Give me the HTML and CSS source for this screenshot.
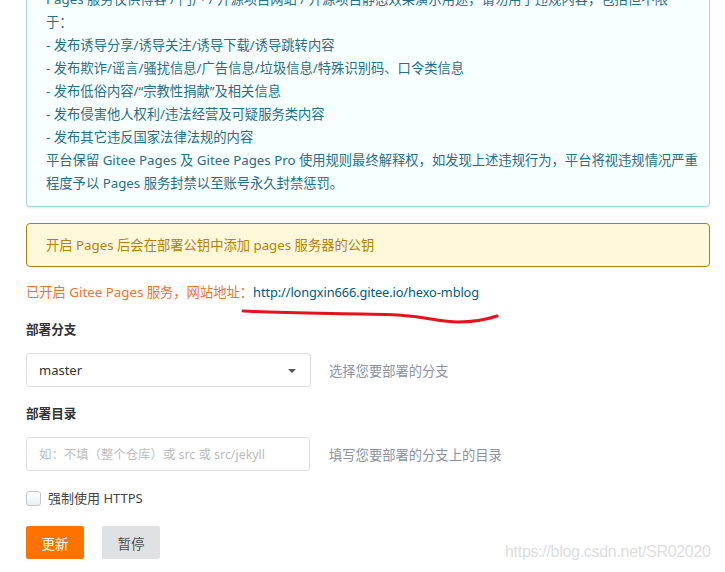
FILE: index.html
```html
<!DOCTYPE html>
<html lang="zh-CN">
<head>
<meta charset="utf-8">
<title>Gitee Pages</title>
<link rel="stylesheet" href="styles.css">
</head>
<body>
<div class="page">
  <div class="msg msg-info">
    <p>Pages 服务仅供博客 / 门户 / 开源项目网站 / 开源项目静态效果演示用途，请勿用于违规内容，包括但不限<br>于：</p>
    <p>- 发布诱导分享/诱导关注/诱导下载/诱导跳转内容</p>
    <p>- 发布欺诈/谣言/骚扰信息/广告信息/垃圾信息/特殊识别码、口令类信息</p>
    <p>- 发布低俗内容/“宗教性捐献”及相关信息</p>
    <p>- 发布侵害他人权利/违法经营及可疑服务类内容</p>
    <p>- 发布其它违反国家法律法规的内容</p>
    <p>平台保留 Gitee Pages 及 Gitee Pages Pro 使用规则最终解释权，如发现上述违规行为，平台将视违规情况严重<br>程度予以 Pages 服务封禁以至账号永久封禁惩罚。</p>
  </div>

  <div class="msg msg-yellow">开启 Pages 后会在部署公钥中添加 pages 服务器的公钥</div>

  <div class="status">已开启 Gitee Pages 服务，网站地址：<a class="site-link" href="#">http://longxin666.gitee.io/hexo-mblog</a></div>

  <div class="field">
    <div class="label">部署分支</div>
    <div class="row">
      <div class="select"><span>master</span><i class="caret"></i></div>
      <div class="help">选择您要部署的分支</div>
    </div>
  </div>

  <div class="field">
    <div class="label">部署目录</div>
    <div class="row">
      <div class="input"><span class="placeholder">如：不填（整个仓库）或 src 或 src/jekyll</span></div>
      <div class="help">填写您要部署的分支上的目录</div>
    </div>
  </div>

  <div class="check-row"><span class="checkbox"></span><span class="check-label">强制使用 HTTPS</span></div>

  <div class="actions">
    <button class="btn btn-orange">更新</button>
    <button class="btn btn-gray">暂停</button>
  </div>
</div>

<svg class="scribble" width="725" height="572" viewBox="0 0 725 572">
  <path d="M243 311 C 290 314 350 313 398 315 C 428 317 440 322 458 322 C 478 322 488 319 497 316" fill="none" stroke="#e3141b" stroke-width="3" stroke-linecap="round"/>
</svg>
<div class="watermark">https://blog.csdn.net/SR02020</div>
</body>
</html>
```

FILE: styles.css
```css
html, body {
  margin: 0;
  padding: 0;
  background: #ffffff;
}
body {
  font-family: "Noto Sans", "Noto Sans CJK SC", sans-serif;
  font-size: 13px;
  color: rgba(0, 0, 0, 0.87);
  overflow: hidden;
  width: 725px;
  height: 572px;
}
.page {
  display: flex;
  flex-direction: column;
  padding: 0 15px 0 26px;
  margin-top: -24px;
}
.msg {
  border-radius: 4px;
  padding: 11px 19px;
}
.msg-info {
  background: #f8ffff;
  color: #276f86;
  border: 1px solid #a9d5de;
  box-shadow: 0 1px 2px rgba(34, 36, 38, 0.12);
  line-height: 23px;
  font-size: 13.3px;
  white-space: nowrap;
}
.msg-info p {
  margin: 0;
}
.msg-yellow {
  margin-top: 16px;
  background: #fff8db;
  color: #b58105;
  border: 1px solid #b58105;
  line-height: 20px;
  font-size: 13.3px;
}
.status {
  margin-top: 15px;
  line-height: 20px;
  color: #f4722c;
  font-size: 13.3px;
}
.site-link {
  color: #005980;
  text-decoration: none;
  font-size: 12.8px;
  letter-spacing: -0.1px;
}
.field {
  display: flex;
  flex-direction: column;
}
.label {
  margin-top: 18px;
  line-height: 20px;
  font-weight: 700;
  font-size: 12.6px;
  color: #333333;
}
.field + .field .label {
  margin-top: 17px;
}
.row {
  margin-top: 13px;
  display: flex;
  align-items: center;
}
.select, .input {
  box-sizing: border-box;
  width: 285px;
  height: 34px;
  border: 1px solid #dcdfe6;
  border-radius: 3px;
  background: #ffffff;
  display: flex;
  align-items: center;
  padding: 0 12px;
}
.input {
  width: 284px;
}
.select span {
  flex: 1;
  color: #333333;
}
.caret {
  width: 0;
  height: 0;
  border-left: 4px solid transparent;
  border-right: 4px solid transparent;
  border-top: 4px solid #555555;
  margin-right: 2px;
  margin-top: 2px;
}
.placeholder {
  color: #bcbcbc;
  font-size: 12.4px;
}
.help {
  margin-left: 19px;
  color: #8c92a4;
  font-size: 13.3px;
}
.select + .help {
  margin-left: 18px;
}
.check-row {
  margin-top: 17px;
  display: flex;
  align-items: center;
  line-height: 20px;
}
.checkbox {
  box-sizing: border-box;
  width: 15px;
  height: 15px;
  border: 1px solid #c6c8cc;
  border-radius: 3px;
  background: linear-gradient(#ffffff, #eceef0);
}
.check-label {
  margin-left: 7px;
  color: #444444;
}
.actions {
  margin-top: 18px;
  display: flex;
  gap: 18px;
}
.btn {
  width: 58px;
  height: 33px;
  border: none;
  border-radius: 2px;
  font-family: "Noto Sans", "Noto Sans CJK SC", sans-serif;
  font-size: 13.5px;
  padding: 0;
}
.btn-orange {
  background: #fe7300;
  color: #ffffff;
}
.btn-gray {
  background: #e0e1e2;
  color: rgba(0, 0, 0, 0.7);
}
.scribble {
  position: absolute;
  left: 0;
  top: 0;
  pointer-events: none;
}
.watermark {
  position: absolute;
  left: 505px;
  top: 543px;
  font-family: "Liberation Sans", sans-serif;
  font-size: 16px;
  color: #dedede;
  letter-spacing: -0.3px;
}
```
